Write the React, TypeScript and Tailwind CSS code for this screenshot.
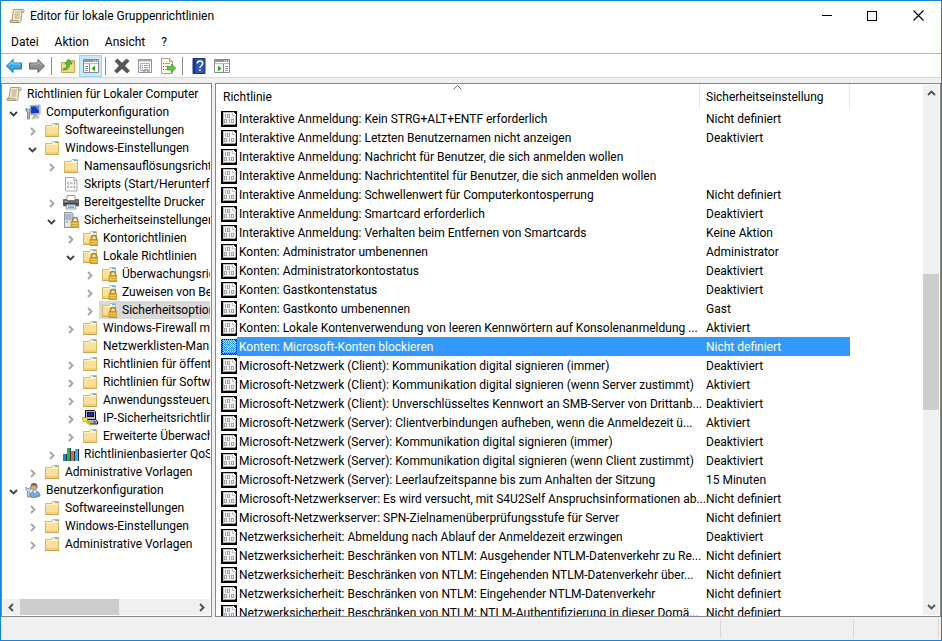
import React, { useState } from "react";

type IconName = "scroll" | "computer" | "folder" | "script" | "printer" | "server" | "lockFolder" | "ipsec" | "chart" | "user";

type Node = {
  label: string;
  icon: IconName;
  open?: boolean;
  leaf?: boolean;
  selected?: boolean;
  children?: Node[];
};

const tree: Node[] = [
  {
    label: "Computerkonfiguration",
    icon: "computer",
    open: true,
    children: [
      { label: "Softwareeinstellungen", icon: "folder" },
      {
        label: "Windows-Einstellungen",
        icon: "folder",
        open: true,
        children: [
          { label: "Namensauflösungsrichtlinie", icon: "folder" },
          { label: "Skripts (Start/Herunterfahren)", icon: "script", leaf: true },
          { label: "Bereitgestellte Drucker", icon: "printer" },
          {
            label: "Sicherheitseinstellungen",
            icon: "server",
            open: true,
            children: [
              { label: "Kontorichtlinien", icon: "lockFolder" },
              {
                label: "Lokale Richtlinien",
                icon: "lockFolder",
                open: true,
                children: [
                  { label: "Überwachungsrichtlinie", icon: "lockFolder" },
                  { label: "Zuweisen von Benutzerrechten", icon: "lockFolder" },
                  { label: "Sicherheitsoptionen", icon: "lockFolder", selected: true },
                ],
              },
              { label: "Windows-Firewall mit erweiterter Sicherheit", icon: "folder" },
              { label: "Netzwerklisten-Manager-Richtlinien", icon: "folder", leaf: true },
              { label: "Richtlinien für öffentliche Schlüssel", icon: "folder" },
              { label: "Richtlinien für Softwareeinschränkung", icon: "folder" },
              { label: "Anwendungssteuerungsrichtlinien", icon: "folder" },
              { label: "IP-Sicherheitsrichtlinien", icon: "ipsec" },
              { label: "Erweiterte Überwachungsrichtlinie", icon: "folder" },
            ],
          },
          { label: "Richtlinienbasierter QoS", icon: "chart" },
        ],
      },
      { label: "Administrative Vorlagen", icon: "folder" },
    ],
  },
  {
    label: "Benutzerkonfiguration",
    icon: "user",
    open: true,
    children: [
      { label: "Softwareeinstellungen", icon: "folder" },
      { label: "Windows-Einstellungen", icon: "folder" },
      { label: "Administrative Vorlagen", icon: "folder" },
    ],
  },
];

const policies: [string, string][] = [
  ["Interaktive Anmeldung: Kein STRG+ALT+ENTF erforderlich", "Nicht definiert"],
  ["Interaktive Anmeldung: Letzten Benutzernamen nicht anzeigen", "Deaktiviert"],
  ["Interaktive Anmeldung: Nachricht für Benutzer, die sich anmelden wollen", ""],
  ["Interaktive Anmeldung: Nachrichtentitel für Benutzer, die sich anmelden wollen", ""],
  ["Interaktive Anmeldung: Schwellenwert für Computerkontosperrung", "Nicht definiert"],
  ["Interaktive Anmeldung: Smartcard erforderlich", "Deaktiviert"],
  ["Interaktive Anmeldung: Verhalten beim Entfernen von Smartcards", "Keine Aktion"],
  ["Konten: Administrator umbenennen", "Administrator"],
  ["Konten: Administratorkontostatus", "Deaktiviert"],
  ["Konten: Gastkontenstatus", "Deaktiviert"],
  ["Konten: Gastkonto umbenennen", "Gast"],
  ["Konten: Lokale Kontenverwendung von leeren Kennwörtern auf Konsolenanmeldung ...", "Aktiviert"],
  ["Konten: Microsoft-Konten blockieren", "Nicht definiert"],
  ["Microsoft-Netzwerk (Client): Kommunikation digital signieren (immer)", "Deaktiviert"],
  ["Microsoft-Netzwerk (Client): Kommunikation digital signieren (wenn Server zustimmt)", "Aktiviert"],
  ["Microsoft-Netzwerk (Client): Unverschlüsseltes Kennwort an SMB-Server von Drittanb...", "Deaktiviert"],
  ["Microsoft-Netzwerk (Server): Clientverbindungen aufheben, wenn die Anmeldezeit ü...", "Aktiviert"],
  ["Microsoft-Netzwerk (Server): Kommunikation digital signieren (immer)", "Deaktiviert"],
  ["Microsoft-Netzwerk (Server): Kommunikation digital signieren (wenn Client zustimmt)", "Deaktiviert"],
  ["Microsoft-Netzwerk (Server): Leerlaufzeitspanne bis zum Anhalten der Sitzung", "15 Minuten"],
  ["Microsoft-Netzwerkserver: Es wird versucht, mit S4U2Self Anspruchsinformationen ab...", "Nicht definiert"],
  ["Microsoft-Netzwerkserver: SPN-Zielnamenüberprüfungsstufe für Server", "Nicht definiert"],
  ["Netzwerksicherheit: Abmeldung nach Ablauf der Anmeldezeit erzwingen", "Deaktiviert"],
  ["Netzwerksicherheit: Beschränken von NTLM: Ausgehender NTLM-Datenverkehr zu Re...", "Nicht definiert"],
  ["Netzwerksicherheit: Beschränken von NTLM: Eingehenden NTLM-Datenverkehr über...", "Nicht definiert"],
  ["Netzwerksicherheit: Beschränken von NTLM: Eingehender NTLM-Datenverkehr", "Nicht definiert"],
  ["Netzwerksicherheit: Beschränken von NTLM: NTLM-Authentifizierung in dieser Domä...", "Nicht definiert"],
];

function Svg({ children }: { children: React.ReactNode }) {
  return (
    <svg viewBox="0 0 16 16" className="size-4 shrink-0" fill="none" aria-hidden="true">
      {children}
    </svg>
  );
}

function FolderShape() {
  return (
    <>
      <path d="M1.5 14.5v-11h6l1.500-2h5.500v13z" fill="#fbe09a" stroke="#dcb660" />
      <path d="M9.500 2h4.500v2h-5.500z" fill="#fff6dc" />
      <path d="M11 2.500h3" stroke="#58a7e6" />
      <path d="M2 4.500h12" stroke="#fff1c4" />
      <path d="M2 12h12v2H2z" fill="#f3cf7c" />
      <path d="M1 14.500h14" stroke="#cfa650" />
    </>
  );
}

function LockShape() {
  return (
    <>
      <path d="M9.500 9.500V8a2.500 2.500 0 0 1 5 0v1.500" stroke="#a08343" strokeWidth="1.400" />
      <path d="M8 9.500h8V15.500H8z" fill="#dda92c" stroke="#b98a22" strokeWidth=".8" />
      <path d="M8.500 11.500h7M8.500 13.500h7" stroke="#f6d36b" strokeWidth=".8" />
    </>
  );
}

function ScrollIcon() {
  return (
    <Svg>
      <path d="M4.500 1.500h9c1.500 0 2 1 1.500 2.500h-2l-1 8.500c-.2 1.500-.8 2-2 2h-8c-1.300 0-1.500-1.500-.5-2.500h1.500z" fill="#f3ead0" stroke="#a99a74" />
      <path d="M2 12.500h7c.2 1 .2 1.500 1 2H2.500c-1 0-1.200-1.200-.5-2z" fill="#d9cba4" stroke="#9b8c65" strokeWidth=".7" />
      <path d="M13 1.500c-1 .6-.8 1.500-.8 2.500H15" stroke="#a99a74" strokeWidth=".9" />
      <path d="M6 4h5M5.700 6h5M5.500 8h5M5.200 10h5" stroke="#b5a67e" />
    </Svg>
  );
}

function TreeIcon({ name }: { name: IconName }) {
  switch (name) {
    case "scroll":
      return <ScrollIcon />;
    case "computer":
      return (
        <Svg>
          <path d="M5 1.500l10-.5v9l-9 1z" fill="#d8dde2" stroke="#929ba5" strokeWidth=".8" />
          <path d="M6 2.500l8-.5v7l-8 .8z" fill="#1437c4" />
          <path d="M10 2.200l4-.2v5z" fill="#5b8df0" />
          <path d="M8 11l4-.5 1 2.500-5 1z" fill="#aeb6bf" />
          <path d="M7 13.500l7-1v1.500l-7 1z" fill="#dfe3e7" stroke="#9aa3ac" strokeWidth=".5" />
          <path d="M1 4v3l1.500 1v7h2V8L6 7V4L4.500 5.500h-2z" fill="#b7c4d0" stroke="#5d7389" strokeWidth=".8" />
        </Svg>
      );
    case "folder":
      return <Svg><FolderShape /></Svg>;
    case "lockFolder":
      return <Svg><FolderShape /><LockShape /></Svg>;
    case "script":
      return (
        <Svg>
          <path d="M2.500 1.500h8.500l3 3v10.500H2.500z" fill="#fcfcfc" stroke="#a5a5a5" />
          <path d="M11 1.500v3h3" stroke="#a5a5a5" />
          <path d="M5.500 5.500l-1 1.500 1 1.500M7 7h2.500M11 5.500l1 1.500-1 1.500M5.500 9.500l-1 1.500 1 1.500M7 11h2.500M11 9.500l1 1.500-1 1.500" stroke="#777e8c" strokeWidth=".9" />
        </Svg>
      );
    case "printer":
      return (
        <Svg>
          <path d="M4 1.500h8v5H4z" fill="#fff" stroke="#9a9a9a" />
          <path d="M.5 5.500h3v1.500h9V5.500h3v6.500H.5z" fill="#6d7073" stroke="#4e5154" strokeWidth=".8" />
          <path d="M1 9h14v1.500H1z" fill="#3b3d3f" />
          <path d="M4 10.500h8l1 4.500H3z" fill="#dcecf6" stroke="#8a8f94" strokeWidth=".8" />
          <path d="M5 12h6M5 13.500h6" stroke="#66a9d6" />
          <path d="M2 7.500h2" stroke="#c8cccf" />
        </Svg>
      );
    case "server":
      return (
        <Svg>
          <path d="M1.500.5h7l1.500 1.500v13.500h-8.500z" fill="#cfd6dd" stroke="#8d97a1" />
          <path d="M2.500 3h6M2.500 5h6M2.500 7h6" stroke="#8797a8" />
          <path d="M2 8.500h7v6H2z" fill="#e3e8ec" />
          <path d="M3 10h2" stroke="#54b455" />
          <LockShape />
        </Svg>
      );
    case "ipsec":
      return (
        <Svg>
          <path d="M3.500.5h9l1 1v8h-10z" fill="#bcbcbc" stroke="#111" />
          <path d="M5 2h7v5H5z" fill="#101010" />
          <path d="M6 3h5v3H6z" fill="#1028ef" />
          <path d="M4.500 9.500h9l2 2v2.500H7z" fill="#b4b4b4" stroke="#161616" />
          <path d="M11 12h3" stroke="#333" />
          <path d="M0 7.500h3.500l2 1.500v2l4 4-1 .8-5-4.300H1.500z" fill="#f6ec21" stroke="#8b8200" strokeWidth=".6" />
        </Svg>
      );
    case "chart":
      return (
        <Svg>
          <path d="M0 8h4v7H0z" fill="#1f83d8" />
          <path d="M4 2h4v13H4z" fill="#20b544" />
          <path d="M8 5h4v10H8z" fill="#f0633a" />
          <path d="M12 3h4v12h-4z" fill="#3ab3ee" />
          <path d="M3.500 8v7M7.500 2v13M11.500 5v10M15.500 3v12" stroke="#153c4e" />
        </Svg>
      );
    case "user":
      return (
        <Svg>
          <path d="M5 15c-.5-4 1.500-6 4.500-6.500 3.500.2 5.500 2.500 5.500 5.500-2 1.500-7 2-10 1z" fill="#78a7d6" stroke="#557fa9" strokeWidth=".7" />
          <path d="M8.500 8.500l1.500 3 1.500-3z" fill="#fff" />
          <circle cx="9" cy="5" r="3.200" fill="#d9a985" stroke="#96765f" strokeWidth=".6" />
          <path d="M5.800 4.500C5.500 1.500 8 .5 9.500 1c2.500.2 3.300 2.500 2.700 5-.7-2-2-2.500-3.700-2.500-1 0-1.700 0-2.700 1z" fill="#6b625b" />
          <path d="M1 5v3l1.500 1v6h1.800V9L5.500 8V5L4.300 6.500H2.500z" fill="#d5dde5" stroke="#70849a" strokeWidth=".8" />
        </Svg>
      );
  }
}

function PolicyIcon({ selected }: { selected: boolean }) {
  return (
    <svg viewBox="0 0 16 16" className="size-4 shrink-0" fill="none" shapeRendering="crispEdges" aria-hidden="true">
      <path d="M0 0h16v16H0z" fill="#050505" />
      <path d="M2 1h10l3 3v9l-2 1H2z" fill="#c4c4c4" />
      <path d="M3 2h8v3h3v8H3z" fill="#f4f4f4" />
      <path d="M12 1h1v1h1v1h1v1h-3z" fill="#fff" />
      <path d="M4.500 3v4M6.500 3.500h2v3h-2zM4.500 8.500h1v3h-2v-3zM8.500 8v4M10.500 8.500h2v3h-2z" stroke="#a5a3b4" />
      <path d="M3 13.500h10" stroke="#a0a0a0" />
      {selected && (
        <>
          <defs>
            <pattern id="dither" width="2" height="2" patternUnits="userSpaceOnUse">
              <path d="M0 0h1v1H0zM1 1h1v1H1z" fill="#3399ff" />
            </pattern>
          </defs>
          <path d="M0 0h16v16H0z" fill="url(#dither)" />
        </>
      )}
    </svg>
  );
}

function Chevron({ dir, className }: { dir: "up" | "down" | "left" | "right"; className: string }) {
  const d = {
    up: "M2 7l3.500-3.500L9 7",
    down: "M2 4l3.500 3.500L9 4",
    left: "M7 2L3.500 5.500 7 9",
    right: "M4 2l3.500 3.500L4 9",
  }[dir];
  return (
    <svg viewBox="0 0 11 11" className={"size-[11px] " + className} fill="none" stroke="currentColor" strokeWidth="1.900" aria-hidden="true">
      <path d={d} />
    </svg>
  );
}

function TreeItem({ node }: { node: Node }) {
  const [open, setOpen] = useState(Boolean(node.open));
  return (
    <li role="treeitem" aria-expanded={node.leaf ? undefined : open} aria-selected={Boolean(node.selected)}>
      <div className="flex h-[18px]">
        {node.leaf ? (
          <span className="w-5 shrink-0" />
        ) : (
          <button
            type="button"
            aria-label={node.label}
            onClick={() => setOpen(!open)}
            className="flex w-5 shrink-0 items-center justify-center pt-0.5"
          >
            <Chevron dir={open ? "down" : "right"} className={open ? "text-[#404040]" : "text-[#a6a6a6]"} />
          </button>
        )}
        <div className={"flex min-w-0 flex-1 items-center gap-[5px] overflow-hidden pl-0.5 " + (node.selected ? "bg-[#d9d9d9]" : "")}>
          <TreeIcon name={node.icon} />
          <span>{node.label}</span>
        </div>
      </div>
      {open && node.children && (
        <ul role="group" className="pl-[19px]">
          {node.children.map((child) => (
            <TreeItem key={child.label} node={child} />
          ))}
        </ul>
      )}
    </li>
  );
}

function ToolButton({ label, active, children }: { label: string; active?: boolean; children: React.ReactNode }) {
  return (
    <button
      type="button"
      aria-label={label}
      aria-pressed={active}
      className={"flex h-[22px] w-[23px] items-center justify-center " + (active ? "border border-[#99d1ff] bg-[#cce8ff]" : "")}
    >
      {children}
    </button>
  );
}

function ToolSeparator() {
  return <span className="mr-1 ml-[3px] h-[18px] w-px bg-[#8c8c8c]" />;
}

function PanelIcon({ side }: { side: "left" | "right" }) {
  return (
    <Svg>
      <path d="M.5 1.500h15v13H.5z" fill="#fff" stroke="#848b93" />
      <path d="M1 2h14v2H1z" fill="#8d949c" />
      <path d="M10 3h1M12 3h1M14 3h1" stroke="#fff" />
      <path d="M1 5.500h14" stroke="#b4bac0" />
      {side === "left" ? (
        <>
          <path d="M6.500 6v8.500" stroke="#848b93" />
          <path d="M2 8.500h3M2 10.500h3M2 12.500h3" stroke="#7d96b0" />
          <path d="M12 7.500v6L8.500 10.500z" fill="#39a51d" />
        </>
      ) : (
        <>
          <path d="M9.500 6v8.500" stroke="#848b93" />
          <path d="M11 8.500h3M11 10.500h3M11 12.500h3" stroke="#7d96b0" />
          <path d="M4 7.500v6l3.500-3z" fill="#39a51d" />
        </>
      )}
    </Svg>
  );
}

function Toolbar() {
  return (
    <div role="toolbar" aria-label="Werkzeuge" className="flex h-6 items-center border-b border-[#dadada] bg-white pl-px">
      <ToolButton label="Zurück">
        <Svg>
          <path d="M.5 8L7 1.500V5h8.500v6H7v3.500z" fill="#36a9e8" stroke="#1b6fae" />
          <path d="M2.500 7.500L6.300 4v2h8.200" stroke="#8fdcfa" />
        </Svg>
      </ToolButton>
      <ToolButton label="Vorwärts">
        <Svg>
          <path d="M15.500 8L9 1.500V5H.5v6H9v3.500z" fill="#8d8d8d" stroke="#606060" />
          <path d="M1.500 6h8V4l3.500 3.500" stroke="#bdbdbd" />
        </Svg>
      </ToolButton>
      <ToolSeparator />
      <ToolButton label="Übergeordneter Ordner">
        <Svg>
          <path d="M1.500 14.500v-10h5l1.500-2h6.500v12z" fill="#f5d98a" stroke="#cda64e" />
          <path d="M11 4h3" stroke="#58a7e6" />
          <path d="M3 11c3-.5 4-2 4-5H5l3.500-5L12 6H9.500c0 4-2 6-6.500 6z" fill="#58c434" stroke="#2f8e17" strokeWidth=".7" />
        </Svg>
      </ToolButton>
      <ToolButton label="Konsolenstruktur einblenden" active>
        <PanelIcon side="left" />
      </ToolButton>
      <ToolSeparator />
      <ToolButton label="Löschen">
        <Svg>
          <path d="M1 3l2.500-2L8 5.200 12.500 1 15 3l-4.300 4.800L15.500 13 13 15 8 10.500 3 15 .5 13l4.800-5.200z" fill="#575757" stroke="#383838" strokeWidth=".6" />
        </Svg>
      </ToolButton>
      <ToolButton label="Eigenschaften">
        <Svg>
          <path d="M1.500 1.500h13v13h-13z" fill="#fff" stroke="#8f959b" />
          <path d="M2 2h12v1.500H2z" fill="#aab1b8" />
          <path d="M3.500 5.500h9v7h-9z" stroke="#a6b0ba" fill="#fbfcfd" />
          <path d="M5 7.500h1M5 9.500h1M5 11.500h1" stroke="#3d9cd6" />
          <path d="M7 7.500h4.500M7 9.500h4.500M7 11.500h4.500" stroke="#97a5b2" />
          <path d="M6 13.500h2.500M10 13.500h2.500" stroke="#6caedb" />
        </Svg>
      </ToolButton>
      <ToolButton label="Liste exportieren">
        <Svg>
          <path d="M1.500.5h8l3 3v12h-11z" fill="#fdf8e4" stroke="#aaa38c" />
          <path d="M9.500.5v3h3" stroke="#aaa38c" />
          <path d="M3 5.500h1M3 8.500h1M3 11.500h1" stroke="#555" />
          <path d="M5 5.500h5M5 8.500h4M5 11.500h4" stroke="#a4a4a4" />
          <path d="M7.500 8.500h4V6l4.200 4.200-4.200 4.300V12h-4z" fill="#5cc93a" stroke="#35951b" strokeWidth=".7" />
        </Svg>
      </ToolButton>
      <ToolSeparator />
      <ToolButton label="Hilfe">
        <Svg>
          <path d="M2 .5h12v15H2z" fill="#2f55bb" stroke="#1e3576" />
          <path d="M2 1h2.500v14H2z" fill="#1c3588" />
          <path d="M6.300 5.500C6.500 3.800 7.500 3 9 3c1.600 0 2.700.9 2.700 2.300C11.700 7.500 9 7.500 9 10" stroke="#fff" strokeWidth="1.500" />
          <path d="M8.200 11.500h1.600V13H8.200z" fill="#fff" />
        </Svg>
      </ToolButton>
      <ToolButton label="Aktionsbereich einblenden">
        <PanelIcon side="right" />
      </ToolButton>
    </div>
  );
}

export default function App() {
  return (
    <div className="flex h-screen w-full flex-col overflow-hidden border border-[#1883d7] bg-[#f0f0f0] font-['Roboto','Noto_Sans',sans-serif] text-[12px] leading-[18px] whitespace-nowrap text-black">
      <header className="bg-white">
        <div className="flex h-[29px] items-center">
          <div className="flex flex-1 items-center gap-[5px] pl-2">
            <ScrollIcon />
            <h1>Editor für lokale Gruppenrichtlinien</h1>
          </div>
          <button type="button" aria-label="Minimieren" className="flex h-full w-[45px] items-center justify-center">
            <span className="h-px w-2.5 bg-black" />
          </button>
          <button type="button" aria-label="Maximieren" className="flex h-full w-[46px] items-center justify-center">
            <span className="size-2.5 border border-black" />
          </button>
          <button type="button" aria-label="Schließen" className="flex h-full w-[46px] items-center justify-center">
            <svg viewBox="0 0 11 11" className="size-[11px]" stroke="#000" strokeWidth="1.100" aria-hidden="true">
              <path d="M.5.5l10 10M10.500.5l-10 10" />
            </svg>
          </button>
        </div>
        <nav aria-label="Menü" className="flex h-6 items-center border-b border-[#b0b4bb] pl-0.5">
          {["Datei", "Aktion", "Ansicht", "?"].map((item) => (
            <button key={item} type="button" className="px-2">
              {item}
            </button>
          ))}
        </nav>
        <Toolbar />
      </header>

      <main className="flex min-h-0 flex-1 gap-[3px] pt-[5px]">
        <aside className="flex w-[211px] shrink-0 flex-col border border-[#828790] bg-white p-px">
          <ul role="tree" aria-label="Konsolenstruktur" className="min-h-0 flex-1 overflow-hidden">
            <li role="treeitem" aria-expanded="true" aria-selected="false">
              <div className="flex h-[18px] items-center gap-[5px] overflow-hidden pl-[3px]">
                <TreeIcon name="scroll" />
                <span>Richtlinien für Lokaler Computer</span>
              </div>
              <ul role="group">
                {tree.map((node) => (
                  <TreeItem key={node.label} node={node} />
                ))}
              </ul>
            </li>
          </ul>
          <div className="flex h-4 bg-[#f0f0f0]">
            <button type="button" aria-label="Nach links" className="flex w-[17px] items-center justify-center">
              <Chevron dir="left" className="text-[#505050]" />
            </button>
            <div className="flex flex-1">
              <div className="grow-[99] basis-0 bg-[#cdcdcd]" />
              <div className="grow-[74] basis-0" />
            </div>
            <button type="button" aria-label="Nach rechts" className="flex w-[17px] items-center justify-center">
              <Chevron dir="right" className="text-[#505050]" />
            </button>
          </div>
        </aside>

        <section aria-label="Richtlinien" className="flex min-w-0 flex-1 border border-[#828790] bg-white">
          <div className="min-w-0 flex-1 overflow-hidden">
            <table className="w-full table-fixed border-separate border-spacing-0 text-left">
              <colgroup>
                <col className="w-[484px]" />
                <col className="w-[150px]" />
                <col />
              </colgroup>
              <thead>
                <tr className="h-[25px]">
                  <th scope="col" aria-sort="ascending" className="relative border-r border-[#e5e5e5] p-0 pl-[7px] font-normal">
                    Richtlinie
                    <svg viewBox="0 0 9 5" className="absolute inset-x-0 top-px mx-auto h-[5px] w-[9px]" fill="none" stroke="#6d6d6d" aria-hidden="true">
                      <path d="M.5 4.500l4-4 4 4" />
                    </svg>
                  </th>
                  <th scope="col" className="border-r border-[#e5e5e5] p-0 pl-1.5 font-normal">
                    Sicherheitseinstellung
                  </th>
                  <td className="p-0" />
                </tr>
              </thead>
              <tbody className="leading-5">
                {policies.map(([name, value], index) => {
                  const selected = index === 12;
                  const fill = selected ? "bg-[#3399ff] text-white" : "";
                  return (
                    <tr key={name} className="h-[19px]" aria-selected={selected}>
                      <td className="p-0">
                        <div className="flex h-[19px] items-center pl-[5px]">
                          <PolicyIcon selected={selected} />
                          <span className={"h-[19px] flex-1 pl-0.5 " + fill}>{name}</span>
                        </div>
                      </td>
                      <td className="p-0">
                        <div className={"h-[19px] pl-1.5 " + fill}>{value}</div>
                      </td>
                      <td className="p-0" />
                    </tr>
                  );
                })}
              </tbody>
            </table>
          </div>
          <div className="my-px mr-px flex w-4 flex-col bg-[#f0f0f0]">
            <button type="button" aria-label="Nach oben" className="flex h-[17px] items-center justify-center">
              <Chevron dir="up" className="text-[#505050]" />
            </button>
            <div className="flex flex-1 flex-col">
              <div className="grow-[172] basis-0" />
              <div className="grow-[136] basis-0 bg-[#cdcdcd]" />
              <div className="grow-[188] basis-0" />
            </div>
            <button type="button" aria-label="Nach unten" className="flex h-[17px] items-center justify-center">
              <Chevron dir="down" className="text-[#505050]" />
            </button>
          </div>
        </section>
      </main>

      <footer className="flex h-[23px] py-0.5">
        <div className="flex-1 border-r border-[#d7d7d7]" />
        <div className="w-[133px] border-r border-[#d7d7d7]" />
        <div className="mr-0.5 w-[85px] border-r border-[#d7d7d7]" />
      </footer>
    </div>
  );
}
